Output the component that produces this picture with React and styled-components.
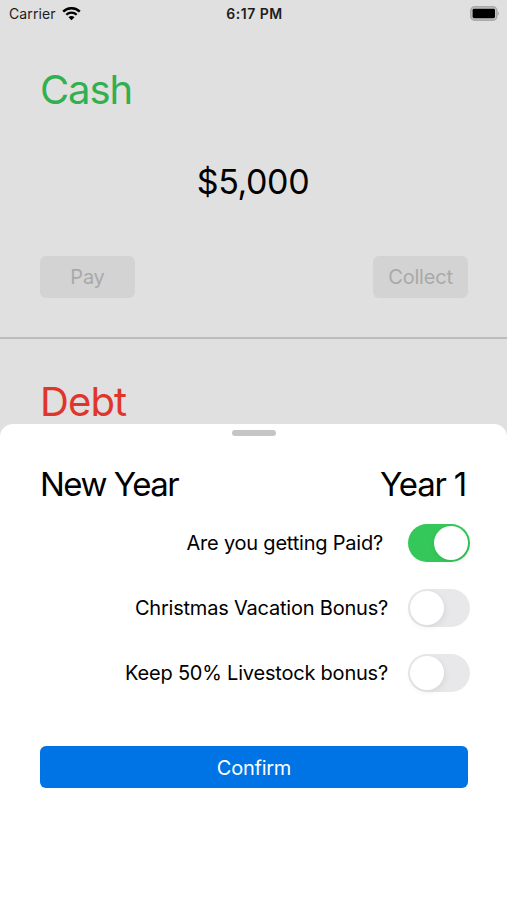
import React, { useState } from 'react';
import styled, { createGlobalStyle } from 'styled-components';

const GlobalStyle = createGlobalStyle`
  * {
    box-sizing: border-box;
  }

  body {
    margin: 0;
    font-family: Inter, 'Liberation Sans', sans-serif;
    color: #000;
  }
`;

const Screen = styled.div`
  position: relative;
  height: 900px;
  overflow: hidden;
  background: #e0e0e0;
`;

const StatusBar = styled.header`
  display: grid;
  grid-template-columns: 1fr auto 1fr;
  align-items: center;
  height: 27px;
  padding: 0 7px 0 9px;
  font-size: 14px;
  color: #1c1c1c;
`;

const Carrier = styled.div`
  display: flex;
  align-items: center;
  gap: 6px;
  letter-spacing: 0.1px;
`;

const Clock = styled.div`
  font-weight: 600;
  letter-spacing: 0.5px;
`;

const BatteryIcon = styled.svg`
  justify-self: end;
`;

const Account = styled.section`
  height: ${({ $height }) => $height || 'auto'};
  padding: 38px 39px 0 40px;
`;

const Divider = styled.hr`
  height: 2px;
  margin: 0;
  border: none;
  background: #bcbcbc;
`;

const AccountTitle = styled.h1`
  margin: 0;
  font-size: 40px;
  font-weight: 400;
  line-height: 50px;
  letter-spacing: ${({ $spacing }) => $spacing || '0'};
  color: ${({ $color }) => $color};
`;

const Amount = styled.p`
  margin: 43px 0 0;
  padding-right: 2px;
  font-size: 34px;
  line-height: 48px;
  letter-spacing: -0.4px;
  text-align: center;
`;

const Actions = styled.div`
  display: flex;
  justify-content: space-between;
  margin-top: 50px;
`;

const ActionButton = styled.button`
  width: 95px;
  height: 42px;
  padding: 0;
  border: none;
  border-radius: 6px;
  background: #d3d3d3;
  color: #a9a9a9;
  font-family: inherit;
  font-size: 20px;
  letter-spacing: -0.2px;
`;

const Sheet = styled.div`
  position: absolute;
  top: 424px;
  left: 0;
  right: 0;
  bottom: 0;
  padding: 6px 39px 0 40px;
  border-radius: 13px 13px 0 0;
  background: #fff;
`;

const Grabber = styled.div`
  width: 44px;
  height: 6px;
  margin: 0 auto;
  border-radius: 3px;
  background: #c5c5c5;
`;

const SheetHeader = styled.div`
  display: flex;
  justify-content: space-between;
  margin-top: 24px;
  padding-right: 2px;
  font-size: 33px;
  line-height: 48px;
`;

const SheetTitle = styled.span`
  letter-spacing: ${({ $spacing }) => $spacing || '0'};
`;

const Options = styled.div`
  display: flex;
  flex-direction: column;
  gap: 27px;
  margin: 16px -2px 0 0;
`;

const Option = styled.label`
  display: flex;
  align-items: center;
  justify-content: flex-end;
  gap: ${({ $gap }) => $gap}px;
  height: 38px;
  font-size: 20px;
  letter-spacing: -0.21px;
`;

const Toggle = styled.button`
  display: flex;
  justify-content: ${({ $on }) => ($on ? 'flex-end' : 'flex-start')};
  width: 62px;
  height: 38px;
  padding: 2px;
  border: none;
  border-radius: 19px;
  background: ${({ $on }) => ($on ? '#34c759' : '#e8e8ea')};
`;

const Knob = styled.span`
  width: 34px;
  height: 34px;
  border-radius: 50%;
  background: #fff;
  box-shadow: 1px 2px 6px rgba(0, 0, 0, 0.08);
`;

const ConfirmButton = styled.button`
  width: 100%;
  height: 42px;
  margin-top: 54px;
  padding: 1px 0 0;
  border: none;
  border-radius: 6px;
  background: #0074e4;
  color: #fff;
  font-family: inherit;
  font-size: 20px;
  letter-spacing: -0.25px;
`;

const Wifi = () => (
  <svg width="19" height="14" viewBox="0 0 19 14" fill="none">
    <path d="M1.2 4.6A11.8 11.8 0 0 1 17.8 4.6" stroke="#000" strokeWidth="2.4" />
    <path d="M4.3 7.8A7.4 7.4 0 0 1 14.7 7.8" stroke="#000" strokeWidth="2.2" />
    <path d="M9.5 13.2L6.5 10.2A4.2 4.2 0 0 1 12.5 10.2Z" fill="#000" />
  </svg>
);

const Battery = () => (
  <BatteryIcon width="30" height="15" viewBox="0 0 30 15">
    <rect x="0.8" y="0.8" width="26" height="13.4" rx="3.8" fill="#c4c4c4" stroke="#a8a8a8" strokeWidth="1.5" />
    <rect x="2.6" y="2.8" width="22.4" height="9.4" rx="1.4" fill="#000" />
    <path d="M27.6 5.2a2.6 2.6 0 0 1 0 4.6z" fill="#a8a8a8" />
  </BatteryIcon>
);

const initialOptions = [
  { label: 'Are you getting Paid?', on: true, gap: 25 },
  { label: 'Christmas Vacation Bonus?', on: false, gap: 20 },
  { label: 'Keep 50% Livestock bonus?', on: false, gap: 20 },
];

const App = () => {
  const [options, setOptions] = useState(initialOptions);

  const handleToggle = (index) => {
    setOptions(options.map((o, i) => (i === index ? { ...o, on: !o.on } : o)));
  };

  return (
    <>
      <GlobalStyle />
      <Screen>
        <StatusBar>
          <Carrier>
            Carrier
            <Wifi />
          </Carrier>
          <Clock>6:17 PM</Clock>
          <Battery />
        </StatusBar>

        <Account $height="310px">
          <AccountTitle $color="#30b050" $spacing="-1.1px">Cash</AccountTitle>
          <Amount>$5,000</Amount>
          <Actions>
            <ActionButton disabled>Pay</ActionButton>
            <ActionButton disabled>Collect</ActionButton>
          </Actions>
        </Account>
        <Divider />
        <Account>
          <AccountTitle $color="#e0352b" $spacing="-0.9px">Debt</AccountTitle>
        </Account>

        <Sheet>
          <Grabber />
          <SheetHeader>
            <SheetTitle $spacing="-1.5px">New Year</SheetTitle>
            <SheetTitle $spacing="-1.2px">Year 1</SheetTitle>
          </SheetHeader>
          <Options>
            {options.map((option, index) => (
              <Option key={option.label} $gap={option.gap}>
                <span>{option.label}</span>
                <Toggle $on={option.on} onClick={() => handleToggle(index)}>
                  <Knob />
                </Toggle>
              </Option>
            ))}
          </Options>
          <ConfirmButton>Confirm</ConfirmButton>
        </Sheet>
      </Screen>
    </>
  );
};

export default App;
